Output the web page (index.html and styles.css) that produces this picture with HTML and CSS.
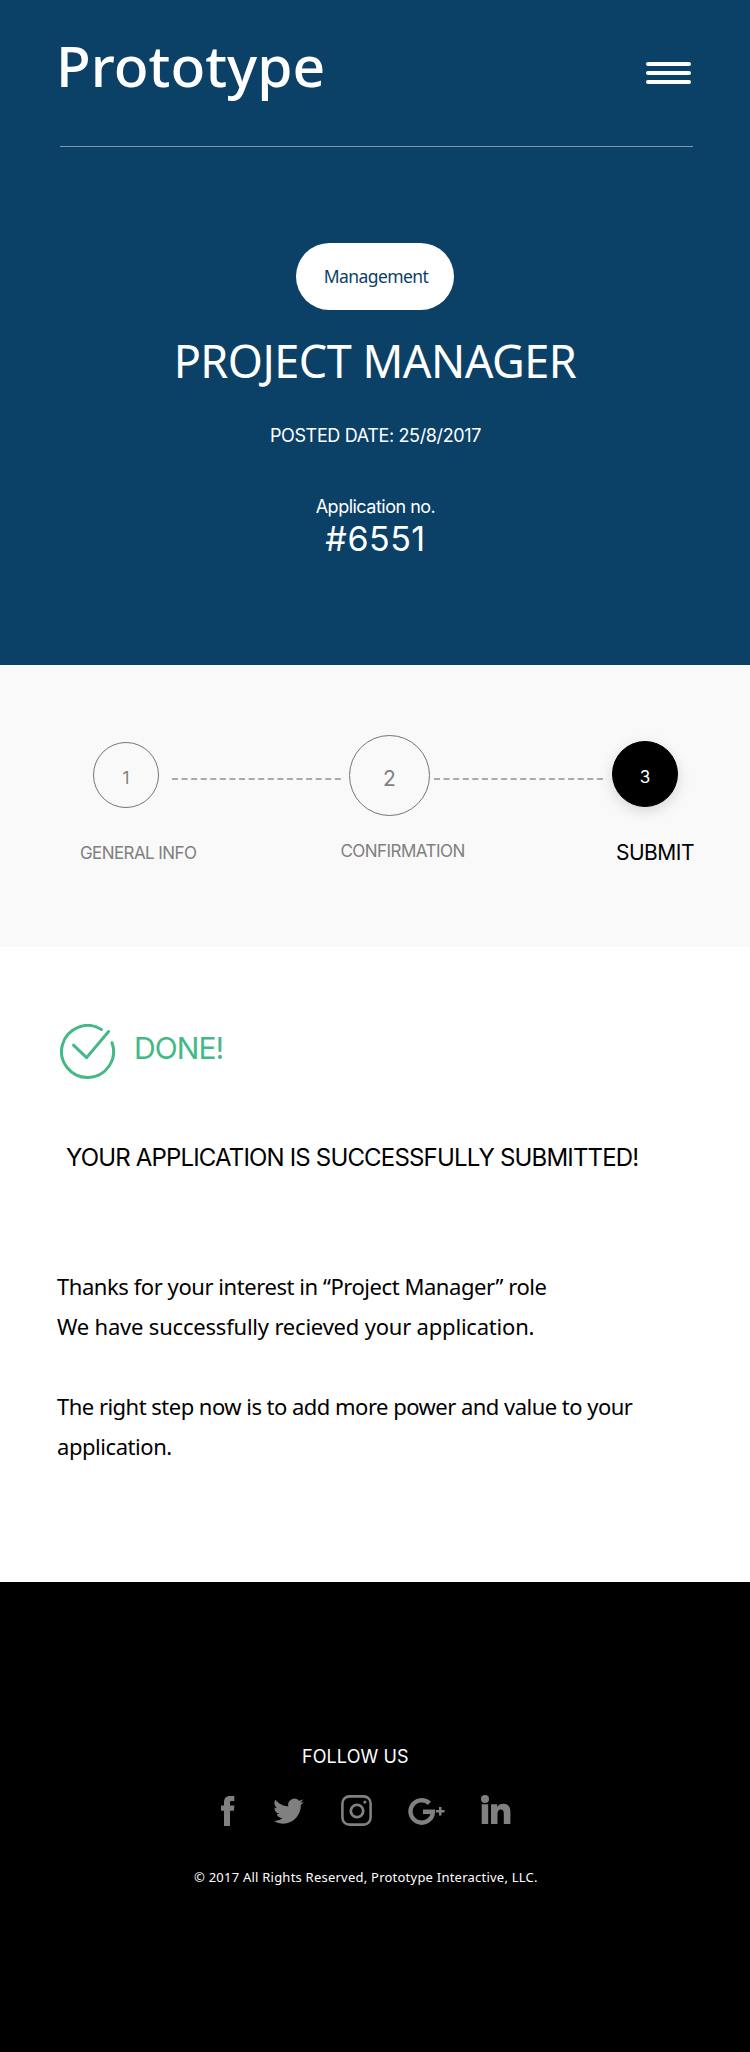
FILE: index.html
```html
<!DOCTYPE html>
<html lang="en">
<head>
<meta charset="utf-8">
<title>Prototype – Project Manager</title>
<link rel="stylesheet" href="styles.css">
</head>
<body>
<header class="hero">
  <div class="topbar">
    <div class="logo">Prototype</div>
    <div class="burger"><i></i><i></i><i></i></div>
  </div>
  <div class="job">
    <span class="pill">Management</span>
    <h1 class="title">PROJECT MANAGER</h1>
    <p class="posted">POSTED DATE: 25/8/2017</p>
    <p class="app-label">Application no.</p>
    <p class="app-no">#6551</p>
  </div>
</header>

<section class="steps">
  <div class="track">
    <div class="dot">1</div>
    <svg class="dash dash-first" width="170" height="2" viewBox="0 0 170 2"><path d="M0 1H170" stroke="#aaa" stroke-width="2" stroke-dasharray="6 3.58"/></svg>
    <div class="dot dot-large">2</div>
    <svg class="dash dash-second" width="170" height="2" viewBox="0 0 170 2"><path d="M0 1H170" stroke="#aaa" stroke-width="2" stroke-dasharray="6 3.58"/></svg>
    <div class="dot dot-active">3</div>
  </div>
  <div class="labels">
    <span class="label">GENERAL INFO</span>
    <span class="label label-mid">CONFIRMATION</span>
    <span class="label label-active">SUBMIT</span>
  </div>
</section>

<main class="content">
  <div class="done">
    <svg width="56" height="56" viewBox="0 0 56 56" fill="none" stroke="#43b985" stroke-width="3" stroke-linecap="round" stroke-linejoin="round">
      <path d="M41.4 5.5A26 26 0 1 0 52 18.7"/>
      <path d="M13.5 21.2L26.6 33.6L48.6 7.5"/>
    </svg>
    <span class="done-text">DONE!</span>
  </div>
  <h2 class="headline">YOUR APPLICATION IS SUCCESSFULLY SUBMITTED!</h2>
  <div class="message">
    <p><span class="line-a">Thanks for your interest in “Project Manager” role</span><br><span class="line-b">We have successfully recieved your application.</span></p>
    <p><span class="line-c">The right step now is to add more power and value to your</span><br><span class="line-a">application.</span></p>
  </div>
</main>

<footer class="footer">
  <p class="follow">FOLLOW US</p>
  <div class="social">
    <svg class="fb" width="14" height="31" viewBox="0 0 14 31"><path d="M3 31V15.7H0V10.6H3V7.4C3 3.2 5 1 9 1H13.3V6.1H10.7C9.3 6.1 9 6.7 9 8V10.6H13.4L12.9 15.7H9V31Z"/></svg>
    <svg class="tw" width="32" height="31" viewBox="0 0 32 31"><path transform="translate(.2 .8) scale(1.28)" d="M23.95 4.57a10 10 0 0 1-2.82.77 4.96 4.96 0 0 0 2.16-2.72c-.95.55-2 .95-3.13 1.18a4.92 4.92 0 0 0-8.38 4.48C7.69 8.1 4.07 6.13 1.64 3.16a4.82 4.82 0 0 0-.67 2.48c0 1.71.87 3.21 2.19 4.1a4.9 4.9 0 0 1-2.23-.62v.06a4.92 4.92 0 0 0 3.95 4.83 5 5 0 0 1-2.21.08 4.94 4.94 0 0 0 4.6 3.42A9.87 9.87 0 0 1 0 19.54a14 14 0 0 0 7.55 2.21c9.05 0 14-7.5 14-13.98 0-.21 0-.42-.02-.63a9.94 9.94 0 0 0 2.42-2.57z"/></svg>
    <svg class="ig" width="31" height="31" viewBox="0 0 31 31"><rect x="1.4" y="1.4" width="28.2" height="28.2" rx="7" fill="none" stroke="#808080" stroke-width="2.6"/><circle cx="16" cy="16" r="6.2" fill="none" stroke="#808080" stroke-width="2.8"/><circle cx="23.9" cy="7.1" r="1.6"/></svg>
    <svg class="gp" width="37" height="31" viewBox="0 0 37 31"><path d="M21.4 8.3A11.2 11.2 0 1 0 24.9 16.7H15" fill="none" stroke="#808080" stroke-width="4.4"/><path d="M31 12h2.5v3h3v2.5h-3v3H31v-3h-3V15h3z"/></svg>
    <svg class="li" width="30" height="31" viewBox="0 0 30 31"><circle cx="4" cy="4" r="4"/><path d="M.7 9.3H7.2V29H.7zM10 9.3H16.2V12C17.4 10 19.6 8.8 22.2 8.8C27.4 8.8 29.4 12 29.4 17V29H22.8V18.3C22.8 16 22 14.6 19.9 14.6C17.5 14.6 16.5 16.3 16.5 18.6V29H10z"/></svg>
  </div>
  <p class="copyright">© 2017 All Rights Reserved, Prototype Interactive, LLC.</p>
</footer>
</body>
</html>
```
FILE: styles.css
```css
* { box-sizing: border-box; }
body { margin: 0; width: 750px; background: #fff; font-family: Inter, "Liberation Sans", sans-serif; color: #000; }
p, h1, h2 { margin: 0; font-weight: 400; white-space: nowrap; }
svg { display: block; flex: none; }

/* Header */
.hero { height: 665px; padding-top: 35px; background: #0b4167; color: #fff; }
.topbar { display: flex; justify-content: space-between; align-items: flex-start; height: 112px; margin: 0 57px 0 60px; border-bottom: 1px solid #8199ac; }
.logo { margin-left: -4px; font: 500 57px/60px "Noto Sans", sans-serif; }
.burger { display: flex; flex-direction: column; gap: 5px; width: 45px; margin: 27px 2px 0 0; }
.burger i { height: 4px; border-radius: 2px; background: #fff; }
.job { display: flex; flex-direction: column; align-items: center; padding-top: 96px; }
.pill { width: 158px; height: 67px; padding-left: 2px; border-radius: 33.5px; background: #fff; color: #0b4167; text-align: center; font: 17.5px/67px "Noto Sans", sans-serif; letter-spacing: -.6px; }
.title { margin: 21px 0 0; font: 45px/60px "Noto Sans", sans-serif; letter-spacing: -.5px; }
.posted { margin: 33px 0 0 1px; font-size: 18px; line-height: 24px; letter-spacing: -.36px; }
.app-label { margin: 47px 0 0 1px; font-size: 18px; line-height: 24px; letter-spacing: -.5px; }
.app-no { margin-left: 1px; font-size: 34px; line-height: 40px; letter-spacing: .5px; }

/* Progress steps */
.steps { height: 282px; padding-top: 69px; background: #f9f9f9; color: #808080; }
.track { display: flex; align-items: center; height: 82px; padding-left: 93px; }
.dot { flex: none; width: 66px; height: 66px; padding-top: 5px; border: 1px solid #757575; border-radius: 50%; text-align: center; font-size: 17px; line-height: 60px; }
.dot-large { width: 81px; height: 81px; padding-top: 6px; font-size: 21px; line-height: 74px; }
.dot-active { margin-top: -2px; background: #000; border-color: #000; color: #fff; box-shadow: 0 4px 14px rgba(0, 0, 0, .14); }
.dash-first { margin: 8px 7px 0 13px; }
.dash-second { margin: 8px 8px 0 4px; }
.labels { display: grid; grid-template-columns: 260.5px 275.5px auto; align-items: start; padding: 23px 0 0 80px; }
.label { padding-top: 2px; font-size: 17px; line-height: 24px; letter-spacing: -.58px; white-space: nowrap; }
.label-mid { padding-top: 0; letter-spacing: -.55px; }
.label-active { padding-top: 2px; color: #000; font-size: 21px; letter-spacing: -.5px; }

/* Confirmation message */
.content { height: 635px; padding: 77px 0 0 60px; }
.done { display: flex; gap: 18px; height: 56px; }
.done-text { padding-top: 4px; color: #43b985; font-size: 30px; line-height: 40px; letter-spacing: -.9px; }
.headline { margin: 63px 0 0 6px; font-size: 24px; line-height: 30px; letter-spacing: -.83px; }
.message { margin: 93px 0 0 -3px; font: 22px/40px "Noto Sans", sans-serif; }
.message p + p { margin-top: 40px; }
.line-a { letter-spacing: -.44px; }
.line-b { letter-spacing: -.2px; }
.line-c { letter-spacing: -.52px; }

/* Footer */
.footer { height: 470px; padding-top: 163px; background: #000; color: #fff; }
.follow { margin-left: 302px; font-size: 18px; line-height: 24px; letter-spacing: .1px; }
.social { display: flex; height: 31px; margin: 26px 0 0 221px; fill: #808080; }
.tw { margin-left: 38px; }
.ig { margin-left: 36px; }
.gp { margin-left: 36px; }
.li { margin-left: 36px; }
.copyright { margin: 41px 0 0 194px; font: 13px/20px "Noto Sans", sans-serif; letter-spacing: .23px; }
```
